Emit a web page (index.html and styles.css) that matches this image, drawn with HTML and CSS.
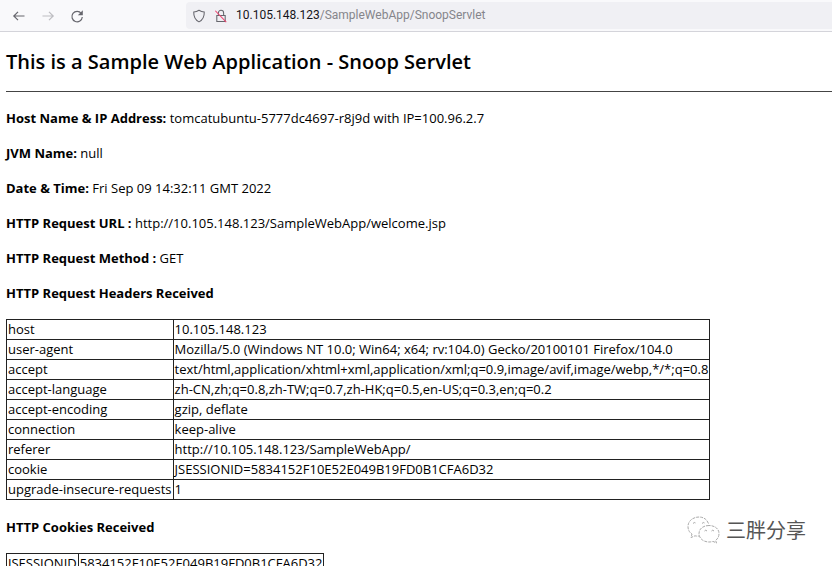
FILE: index.html
```html
<!DOCTYPE html>
<html lang="en">
<head>
<meta charset="utf-8">
<title>Snoop Servlet</title>
<link rel="stylesheet" href="styles.css">
</head>
<body>
<header class="toolbar">
  <nav class="nav">
    <button class="nav-btn" aria-label="Back"><svg width="16" height="16" viewBox="0 0 16 16"><path d="M13.500 8H3M7 3.800L2.800 8L7 12.200"/></svg></button>
    <button class="nav-btn off" aria-label="Forward" disabled><svg width="16" height="16" viewBox="0 0 16 16"><path d="M2.500 8H13M9 3.800L13.200 8L9 12.200"/></svg></button>
    <button class="nav-btn" aria-label="Reload"><svg width="16" height="16" viewBox="0 0 16 16"><path d="M12.300 5.500A5.200 5.200 0 1 0 13.300 9"/><path class="fill" d="M13.800 2.200v5H8.800z"/></svg></button>
  </nav>
  <div class="address">
    <svg width="14" height="14" viewBox="0 0 16 16"><path d="M8 1.500C10 2.800 12 3.400 14 3.500C14.200 9 12 12.800 8 14.700C4 12.800 1.800 9 2 3.500C4 3.400 6 2.800 8 1.500z"/></svg>
    <svg width="14" height="14" viewBox="0 0 16 16"><path d="M5 7V4.500a3 3 0 0 1 6 0V7M3.200 7.500h9.600v6.700h-9.600z"/><path class="red" d="M1.500 2l12.500 13"/></svg>
    <span class="url"><b>10.105.148.123</b>/SampleWebApp/SnoopServlet</span>
  </div>
</header>
<main class="page">
  <h1>This is a Sample Web Application - Snoop Servlet</h1>
  <hr>
  <p><b>Host Name &amp; IP Address:</b> tomcatubuntu-5777dc4697-r8j9d with IP=100.96.2.7</p>
  <p><b>JVM Name:</b> null</p>
  <p><b>Date &amp; Time:</b> Fri Sep 09 14:32:11 GMT 2022</p>
  <p><b>HTTP Request URL :</b> http://10.105.148.123/SampleWebApp/welcome.jsp</p>
  <p><b>HTTP Request Method :</b> GET</p>
  <p><b>HTTP Request Headers Received</b></p>
  <table>
    <tr><td>host</td><td>10.105.148.123</td></tr>
    <tr><td>user-agent</td><td>Mozilla/5.0 (Windows NT 10.0; Win64; x64; rv:104.0) Gecko/20100101 Firefox/104.0</td></tr>
    <tr><td>accept</td><td>text/html,application/xhtml+xml,application/xml;q=0.9,image/avif,image/webp,*/*;q=0.8</td></tr>
    <tr><td>accept-language</td><td>zh-CN,zh;q=0.8,zh-TW;q=0.7,zh-HK;q=0.5,en-US;q=0.3,en;q=0.2</td></tr>
    <tr><td>accept-encoding</td><td>gzip, deflate</td></tr>
    <tr><td>connection</td><td>keep-alive</td></tr>
    <tr><td>referer</td><td>http://10.105.148.123/SampleWebApp/</td></tr>
    <tr><td>cookie</td><td>JSESSIONID=5834152F10E52E049B19FD0B1CFA6D32</td></tr>
    <tr><td>upgrade-insecure-requests</td><td>1</td></tr>
  </table>
  <p><b>HTTP Cookies Received</b></p>
  <table>
    <tr><td>JSESSIONID</td><td>5834152F10E52E049B19FD0B1CFA6D32</td></tr>
  </table>
</main>
<div class="watermark">
  <svg width="34" height="28" viewBox="0 0 34 28"><path d="M21.500 7.500C20 3.500 16.500 1 12 1C6 1 1 5 1 10.500C1 14 2.500 16.500 5 18L4 21.500L8 19.800Q10 20.300 12.500 20"/><path d="M22 9.500c-6 0-10 3.500-10 8s4 8.500 10 8.500q2 0 4-.6l3.500 1.600-.9-2.600c2-1.500 3.400-3.700 3.400-6.900c0-4.500-4-8-10-8z"/><path d="M6 7.500q1.500-2 3 0M15 7.500q1.500-2 3 0M17.500 15q1.200-1.600 2.500 0M24.500 15q1.200-1.600 2.500 0"/></svg>
  <span>三胖分享</span>
</div>
</body>
</html>
```
FILE: styles.css
```css
html { height: 100%; }
body {
  margin: 0;
  height: 100%;
  overflow: hidden;
  background: #fff;
  color: #000;
  font: 13px/19px "Open Sans", "Noto Sans", sans-serif;
}
.toolbar {
  display: flex;
  gap: 101px;
  height: 31px;
  background: #f9f9fb;
  border-bottom: 1px solid #d4d4da;
}
.nav { display: flex; gap: 13px; align-items: center; padding-left: 11px; }
.nav-btn { display: flex; padding: 0; border: 0; background: none; }
.off { opacity: 0.4; }
svg { fill: none; stroke: #66666d; stroke-width: 1.2; }
.fill { fill: #66666d; stroke: none; }
.red { stroke: #f04470; }
.address {
  display: flex;
  flex: 1;
  align-items: center;
  gap: 8px;
  margin: 2px 0;
  padding-left: 6px;
  border-radius: 4px 0 0 4px;
  background: #f0f0f4;
}
.url { color: #85858b; font: 12px/19px Roboto, sans-serif; }
.url b { color: #15141a; font-weight: 400; }
.page { padding-left: 6px; }
h1 { margin: 16px 0 15px; font-size: 20px; line-height: 28px; font-weight: 600; }
hr { margin: 0 0 17px; border: 0; border-top: 1px solid #444; }
p { margin: 16px 0; }
b { font-weight: 700; }
table { margin-bottom: 18px; border-collapse: collapse; }
td { padding: 0 1px; border: 1px solid #222; white-space: nowrap; }
.watermark {
  position: absolute;
  right: 26px;
  bottom: 22px;
  display: flex;
  align-items: center;
  gap: 5px;
  color: #555;
  font: 20px/28px "Noto Sans CJK SC", sans-serif;
}
.watermark svg { stroke: #aaa; stroke-width: 1; stroke-dasharray: 3 1; }
```
